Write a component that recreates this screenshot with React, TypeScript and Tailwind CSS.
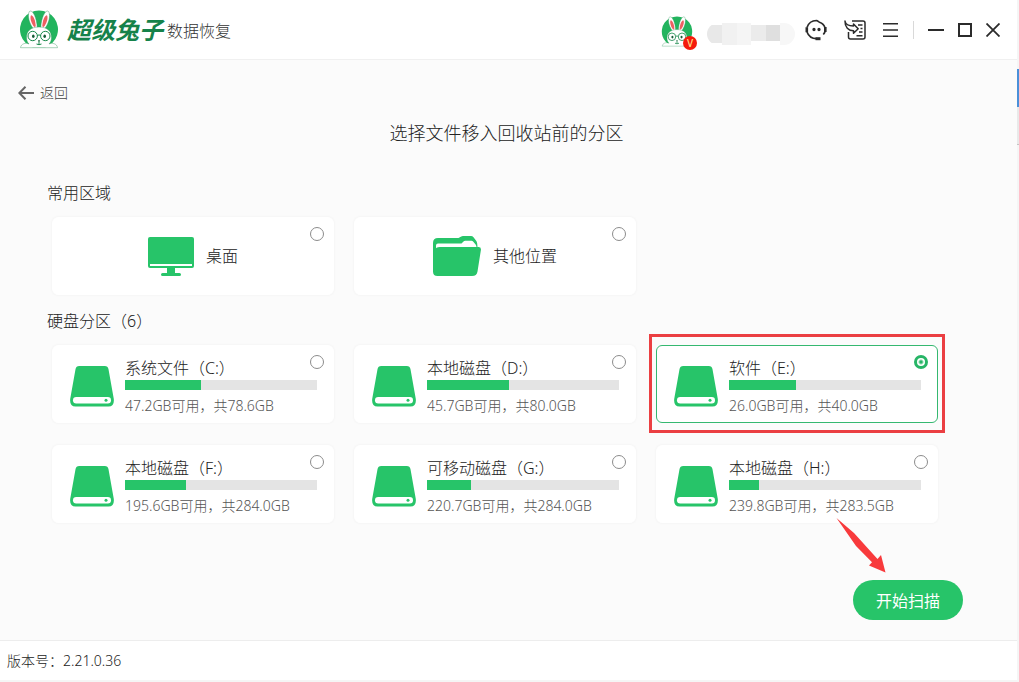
import { useState } from 'react';
import type { ReactNode } from 'react';

interface Disk {
  id: string;
  name: string;
  free: number;
  total: number;
  used: number;
  marked?: boolean;
}

const disks: Disk[] = [
  { id: 'c', name: '系统文件（C:）', free: 47.2, total: 78.6, used: 39.6 },
  { id: 'd', name: '本地磁盘（D:）', free: 45.7, total: 80, used: 42.7 },
  { id: 'e', name: '软件（E:）', free: 26, total: 40, used: 35, marked: true },
  { id: 'f', name: '本地磁盘（F:）', free: 195.6, total: 284, used: 31.6 },
  { id: 'g', name: '可移动磁盘（G:）', free: 220.7, total: 284, used: 22.9 },
  { id: 'h', name: '本地磁盘（H:）', free: 239.8, total: 283.5, used: 15.6 },
];

function RabbitLogo({ className }: { className: string }) {
  return (
    <svg viewBox="0 0 40 40" className={className} aria-hidden="true">
      <path d="M14 37.500A19 19 0 1 1 26 37.500z" fill="#22b45e" />
      <g stroke="#2a8f55" strokeWidth=".4">
        <path d="M15.500 20C10.500 15 8 5.500 10.300 1.600 12.500-1 17.500 5 18.300 18z" fill="#fff" />
        <path d="M24.500 20C29.500 15 32 5.500 29.700 1.600 27.500-1 22.500 5 21.700 18z" fill="#fff" />
        <path d="M20 17c8.500 0 12.500 4.500 12.500 10.500 0 3-1 5-2.500 6.500 3-1.500 8-.5 8.500 3.700h-37C2 33.500 7 32.500 10 34c-1.500-1.500-2.500-3.500-2.500-6.500C7.500 21.500 11.500 17 20 17z" fill="#fff" />
      </g>
      <path d="M15.200 17C11.600 12.500 10.800 7.500 12 5.300c2.400.2 4.600 5.200 4.700 11.200z" fill="#ee5f62" />
      <path d="M24.800 17c3.600-4.500 4.400-9.500 3.200-11.700-2.400.2-4.600 5.200-4.700 11.200z" fill="#ee5f62" />
      <g fill="none" stroke="#17894a" strokeWidth="1">
        <circle cx="13.700" cy="26" r="4.700" />
        <circle cx="26.300" cy="26" r="4.700" />
        <path d="M18.300 25.500q1.700-1.200 3.400 0M20 31v3M17.500 34q2.500 1.400 5 0" />
      </g>
      <ellipse cx="14.300" cy="26.300" rx="1.300" ry="1.700" fill="#155c36" />
      <ellipse cx="25.700" cy="26.300" rx="1.300" ry="1.700" fill="#155c36" />
      <path d="M18.800 30.300h2.400L20 31.700z" fill="#155c36" />
    </svg>
  );
}

function DiskIcon() {
  return (
    <svg viewBox="0 0 44 41" className="h-[41px] w-11 shrink-0" aria-hidden="true">
      <path d="M9.500 0h25a4 4 0 0 1 4 3.200L43.800 33q.7 7.500-5.300 7.500h-33Q-.5 40.500.2 33L5.500 3.200A4 4 0 0 1 9.500 0z" fill="#27c469" />
      <rect x="3" y="31" width="38" height="6.500" rx="3.200" fill="#fff" />
      <circle cx="36" cy="34.300" r="1.500" fill="#27c469" />
    </svg>
  );
}

function MonitorIcon() {
  return (
    <svg viewBox="0 0 46 39" className="h-[39px] w-[46px]" fill="#27c469" aria-hidden="true">
      <rect width="46" height="31" rx="2" />
      <rect x="2" y="27" width="42" height="2" fill="#fff" />
      <path d="M19 31h8v5h4.500q1.500 0 1.500 1.500T31.500 39h-17q-1.500 0-1.500-1.500t1.500-1.500H19z" />
    </svg>
  );
}

function FolderIcon() {
  return (
    <svg viewBox="0 0 48 40" className="h-10 w-12" aria-hidden="true">
      <path d="M0 7q0-5 5-5h20.500L27.800.7Q29 0 30 0h8q1.500 0 2.500 1.200l3 4q1 1.500 1 5.500L24 30H0z" fill="#27c469" />
      <path d="M3 13.500V9.500q0-2 2-2h23.500l2-2q.7-.7 1.700-.7h6.300q1 0 1.800 1l2.500 3q.5 1 .7 2.200H7.500Q4.500 11.500 3 13.500z" fill="#fff" />
      <path d="M0 19.500q0-8.500 7-8.500h38.500q2.800 0 2.400 3L44.500 35.500Q43.800 40 39 40H4.500Q0 40 0 35.500z" fill="#27c469" />
    </svg>
  );
}

interface OptionCardProps {
  id: string;
  selected: string;
  onSelect: (id: string) => void;
  marked?: boolean;
  children: ReactNode;
}

function OptionCard({ id, selected, onSelect, marked, children }: OptionCardProps) {
  return (
    <label
      className={`relative flex h-[78px] cursor-pointer rounded-md border bg-white ${
        selected === id ? 'border-[#35b870]' : 'border-white shadow-[0_0_3px_rgba(0,0,0,0.05)]'
      }`}
    >
      {children}
      <input
        type="radio"
        name="location"
        value={id}
        checked={selected === id}
        onChange={() => onSelect(id)}
        className="absolute top-[9px] right-[9px] h-3.5 w-3.5 appearance-none rounded-full border border-[#8c8c8c] bg-white checked:border-3 checked:border-[#27b566] checked:bg-[radial-gradient(circle,#27b566_1px,#fff_3px)]"
      />
      {marked && (
        <span className="pointer-events-none absolute -inset-x-2 -top-3 -bottom-[11px] border-3 border-[#eb3f42]" />
      )}
    </label>
  );
}

export default function App() {
  const [selected, setSelected] = useState('e');

  return (
    <div className="flex min-h-screen bg-[#f5f5f5] font-['Noto_Sans','Noto_Sans_CJK_SC',sans-serif] font-light text-[#222]">
      <div className="mb-0.5 flex flex-1 flex-col bg-[#fbfbfb]">
        <header className="flex h-[60px] items-center justify-between border-b border-[#f0f0f0] bg-white pr-[17px] pl-[19px]">
          <div className="flex items-center">
            <RabbitLogo className="h-10 w-10" />
            <span className="ml-2 text-2xl font-bold text-[#16824a] italic">超级兔子</span>
            <span className="ml-1 pt-0.5 text-base text-[#333]">数据恢复</span>
          </div>

          <div className="flex items-center text-[#2b2b2b]">
            <div className="relative pt-1">
              <RabbitLogo className="h-8 w-8" />
              <span className="absolute -right-1 -bottom-0.5 flex h-3.5 w-3.5 items-center justify-center rounded-full bg-[#f51b0b] text-[10px] leading-none font-medium text-[#ffdf8a]">
                V
              </span>
            </div>
            <div className="mt-2 mr-2.5 ml-3.5 flex h-[22px] w-[88px] overflow-hidden rounded-full">
              <div className="mt-0.5 h-[18px] flex-1 bg-[#e8e8e8]" />
              <div className="flex-1 bg-[#f1f1f1]" />
              <div className="flex-1 bg-[#f5f5f5]" />
              <div className="mt-0.5 h-4 flex-1 bg-[#ebebeb]" />
              <div className="mt-0.5 h-4 w-3.5 bg-[#dfdfdf]" />
              <div className="flex-1 bg-[#f7f7f7]" />
            </div>
            <button aria-label="客服">
              <svg viewBox="0 0 22 22" className="h-[22px] w-[22px]" fill="none" stroke="currentColor" strokeWidth="1.700">
                <path d="M2 8.500C3.500 4 7.500 1.500 11.500 1.500c1.200.2 1.800 1.300 3 1.800C17.500 4.300 19.300 6.500 20 9M2 13c1.500 4 5 6.700 9.500 6.700" />
                <path d="M1.800 8.300v4.900M20.300 8v4.900" strokeWidth="2.600" />
                <path d="M20 12.500c-.3 1.200-.8 2-1.700 3" />
                <path d="M10.500 19.700h5" strokeWidth="3" />
                <circle cx="9" cy="10.500" r=".8" fill="currentColor" />
                <circle cx="14" cy="10.500" r=".8" fill="currentColor" />
              </svg>
            </button>
            <button aria-label="导入" className="ml-[17px]">
              <svg viewBox="0 0 22 22" className="h-[22px] w-[22px]" fill="none" stroke="currentColor" strokeWidth="1.500">
                <path d="M8 2h11q2 0 2 2v14q0 2-2 2H6.500q-2 0-2-2v-5" />
                <path d="M1 2c.5 3.500 3.500 5 8.500 5V5l4.700 4.700-4.700 4.600v-2.500C4.500 11.800.8 8 1 2z" strokeLinejoin="round" />
                <path d="M14 6h4.500M16.500 9.500h2M15 13h3.500M12.500 16.700h6" />
              </svg>
            </button>
            <button aria-label="菜单" className="ml-[17px]">
              <svg viewBox="0 0 16 14" className="h-3.5 w-4" fill="currentColor">
                <path d="M0 0h15v1.600H0zM0 6.200h15v1.600H0zM0 12.400h15V14H0z" />
              </svg>
            </button>
            <span className="ml-3.5 h-[18px] w-px bg-[#d9d9d9]" />
            <button aria-label="最小化" className="ml-3.5">
              <svg viewBox="0 0 16 14" className="h-3.5 w-4" fill="currentColor">
                <path d="M0 6h16v2H0z" />
              </svg>
            </button>
            <button aria-label="最大化" className="ml-3.5 h-3.5 w-3.5 border-2 border-current" />
            <button aria-label="关闭" className="ml-3.5">
              <svg viewBox="0 0 14 14" className="h-3.5 w-3.5" stroke="currentColor" strokeWidth="1.800">
                <path d="M.5.5l13 13M13.500.5l-13 13" />
              </svg>
            </button>
          </div>
        </header>

        <main className="flex flex-1 flex-col">
          <button className="mt-[23px] ml-[18px] flex items-center gap-1.5 self-start text-sm leading-5 text-[#444]">
            <svg viewBox="0 0 16 14" className="h-3.5 w-4" fill="none" stroke="#666" strokeWidth="2">
              <path d="M7.500.8L1.300 7l6.200 6.200M1.300 7H16" />
            </svg>
            返回
          </button>

          <h1 className="mt-4 pr-1 text-center text-lg leading-7">选择文件移入回收站前的分区</h1>

          <div className="pr-[79px] pl-[52px]">
            <h2 className="mt-[34px] -ml-[5px] text-base leading-6">常用区域</h2>
            <div className="mt-3 grid grid-cols-3 gap-5">
              <OptionCard id="desktop" selected={selected} onSelect={setSelected}>
                <span className="flex flex-1 items-center justify-center gap-3">
                  <MonitorIcon />
                  桌面
                </span>
              </OptionCard>
              <OptionCard id="other" selected={selected} onSelect={setSelected}>
                <span className="flex flex-1 items-center justify-center gap-3">
                  <FolderIcon />
                  其他位置
                </span>
              </OptionCard>
            </div>

            <h2 className="mt-3.5 -ml-[5px] text-base leading-6">硬盘分区（6）</h2>
            <div className="mt-3 grid grid-cols-3 gap-x-5 gap-y-[22px]">
              {disks.map((disk) => (
                <OptionCard key={disk.id} id={disk.id} selected={selected} onSelect={setSelected} marked={disk.marked}>
                  <span className="flex flex-1 items-center gap-[11px] pt-1 pr-4 pl-[17px]">
                    <DiskIcon />
                    <span className="flex-1">
                      <span className="block text-base leading-6">{disk.name}</span>
                      <span className="block h-2.5 bg-[#e4e4e4]">
                        <span className="block h-full bg-[#27c469]" style={{ width: `${disk.used}%` }} />
                      </span>
                      <span className="mt-1.5 block text-sm leading-5 text-[#555]">
                        {disk.free.toFixed(1)}GB可用，共{disk.total.toFixed(1)}GB
                      </span>
                    </span>
                  </span>
                </OptionCard>
              ))}
            </div>
          </div>

          <div className="relative mt-auto mr-[54px] mb-5 self-end">
            <button className="h-10 w-[110px] rounded-full bg-[#27c469] pt-0.5 text-base font-normal text-white">
              开始扫描
            </button>
            <svg viewBox="0 0 50 55" className="absolute bottom-full -left-[17px] mb-[7px] h-[55px] w-[50px]" fill="#f83a3c" aria-hidden="true">
              <path d="M.5 0L18 15 41.500 41 45 37l4.500 17.500L33 47.500l3-3.200L20 28z" />
            </svg>
          </div>
        </main>

        <footer className="flex h-10 items-center border-t border-[#ededed] bg-white pl-[7px] text-sm">
          版本号：2.21.0.36
        </footer>
      </div>

      {/* edge of the window behind */}
      <div className="w-0.5 pt-[69px]">
        <div className="h-[38px] bg-[#4a90d9]" />
        <div className="h-[38px] border-b border-[#c4c4c4] bg-[#e9e9e9]" />
      </div>
    </div>
  );
}
